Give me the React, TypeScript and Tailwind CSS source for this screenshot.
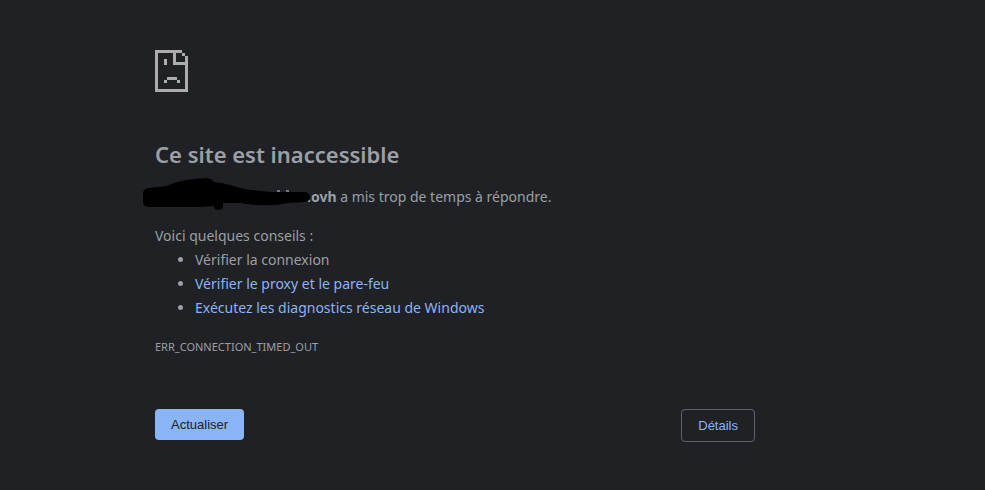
function SadPage() {
  return (
    <svg width="33" height="42" viewBox="0 0 33 42" shapeRendering="crispEdges" fill="#acacac" aria-hidden="true">
      <path d="M0 0H27V3H3V39H30V15H18V3H21V12H30V6H33V42H0Z" />
      <path d="M27 3H30V6H27ZM9 9H12V15H9ZM12 27H22V30H12ZM9 30H12V33H9ZM22 30H25V33H22Z" />
    </svg>
  );
}

function Scribble() {
  return (
    <svg className="absolute -left-3 -top-2" width="168" height="34" viewBox="143 177 168 34" aria-hidden="true">
      <path fill="#73777c" d="M277 190H280V192H277ZM286 190H289V192H286Z" />
      <path
        fill="#000"
        d="M143 193Q144 188 149 188L158 187Q163 187 169 185Q180 180 195 179L208 178Q212 179 214 182Q225 183 240 188Q255 191 272 192L306 192Q310 193 310 197Q310 201 306 202L288 203Q275 206 255 205Q247 204 240 203L223 203V207Q222 210 218 210Q214 210 214 206L200 207L150 207Q143 207 143 202Z"
      />
    </svg>
  );
}

export default function App() {
  return (
    <div className="min-h-screen bg-[#202124] text-[#9aa0a6]">
      <main className="ml-[155px] mr-8 max-w-[600px] pt-[50px] pb-12 font-['Noto_Sans',sans-serif] text-sm leading-6">
        <SadPage />
        <h1 className="mt-12 text-[22px] leading-7 font-semibold">Ce site est inaccessible</h1>
        <p className="mt-[17px]">
          <span className="relative inline-block w-[152px]">
            &nbsp;
            <Scribble />
          </span>
          <strong className="font-bold">.ovh</strong> a mis trop de temps à répondre.
        </p>
        <p className="mt-[15px]">Voici quelques conseils :</p>
        <ul className="list-disc pl-10">
          <li>Vérifier la connexion</li>
          <li><a href="#proxy" className="text-[#8ab4f8]">Vérifier le proxy et le pare-feu</a></li>
          <li><a href="#diagnostics" className="text-[#8ab4f8]">Exécutez les diagnostics réseau de Windows</a></li>
        </ul>
        <p className="mt-[15px] text-[11px] leading-6">ERR_CONNECTION_TIMED_OUT</p>
        <div className="mt-[50px] flex items-start justify-between font-['Liberation_Sans',Arial,sans-serif] text-[13px] leading-[15px]">
          <button type="button" className="rounded bg-[#8ab4f8] px-4 py-2 text-[#202124]">Actualiser</button>
          <button type="button" className="rounded border border-[#5f6368] px-4 py-2 text-[#8ab4f8]">Détails</button>
        </div>
      </main>
    </div>
  );
}
